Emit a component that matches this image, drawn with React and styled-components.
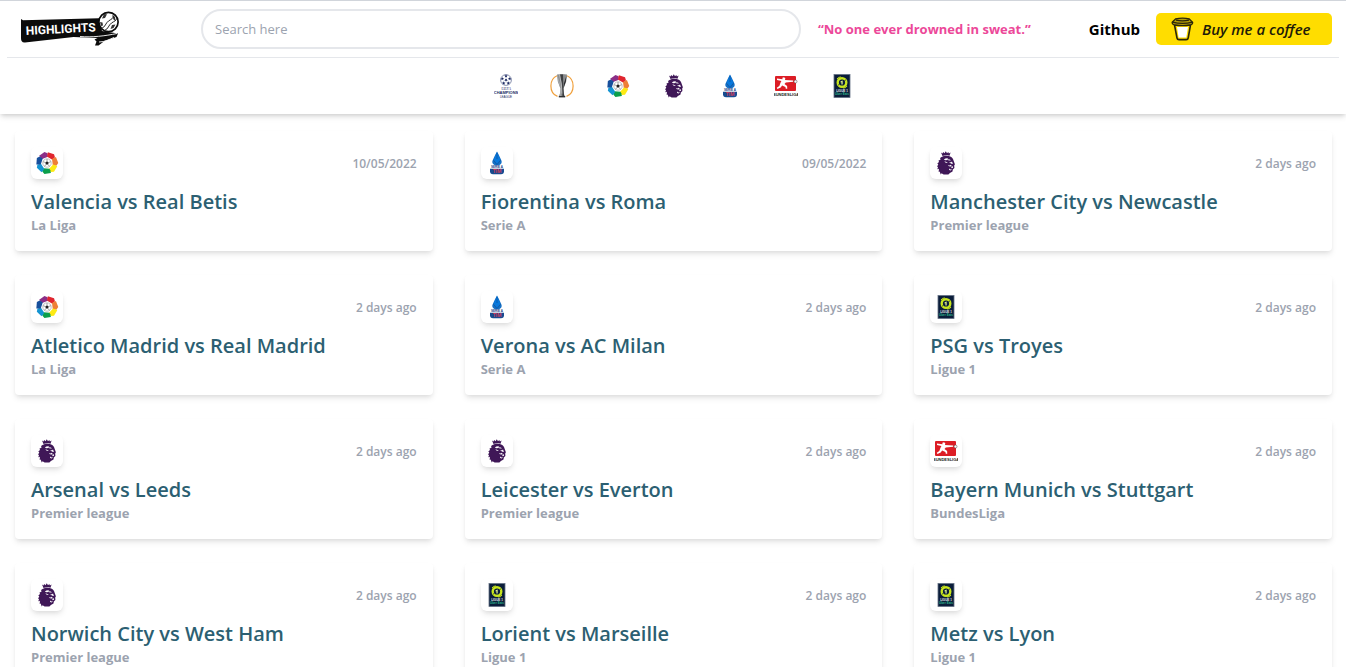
import React from "react";
import styled, { createGlobalStyle } from "styled-components";

const GlobalStyle = createGlobalStyle`
  *, *::before, *::after { box-sizing: border-box; }
  body {
    margin: 0;
    background: #fff;
    font-family: "Segoe UI", "Open Sans", "Noto Sans", sans-serif;
    color: #000;
  }
  h2, p, ul { margin: 0; padding: 0; }
  a { color: inherit; text-decoration: none; }
`;

const Header = styled.header`
  background: #fff;
  border-top: 1px solid #d1d5db;
  box-shadow: 0 4px 6px -1px rgba(0, 0, 0, 0.1), 0 2px 4px -1px rgba(0, 0, 0, 0.12);
`;

const TopBar = styled.div`
  display: flex;
  align-items: center;
  height: 57px;
  margin: 0 7px;
  padding: 0 7px 0 13px;
  border-bottom: 1px solid #e5e7eb;
`;

const Brand = styled.a`
  display: flex;
  flex: none;
  margin-right: 80px;
`;

const SearchInput = styled.input`
  flex: 0 1 600px;
  min-width: 120px;
  height: 40px;
  padding: 0 12px;
  border: 2px solid #e5e7eb;
  border-radius: 20px;
  background: #fff;
  font: 400 13px/20px "Segoe UI", "Open Sans", "Noto Sans", sans-serif;
  color: #374151;
  outline: none;
  &::placeholder { color: #9ca3af; opacity: 1; }
  &:focus { border-color: #9ca3af; }
`;

const Quote = styled.p`
  flex: 1;
  margin-left: 17px;
  font-size: 13px;
  line-height: 20px;
  font-weight: 700;
  color: #ec4899;
`;

const GithubLink = styled.a`
  margin-right: 16px;
  font-size: 15px;
  line-height: 24px;
  font-weight: 700;
`;

const CoffeeLink = styled.a`
  display: flex;
  flex: none;
  align-items: center;
  gap: 8px;
  width: 176px;
  height: 32px;
  padding-left: 15px;
  border-radius: 5px;
  background: #ffdd00;
  color: #1d1a08;
  font: italic 600 15px/20px "Segoe Script", "Open Sans", cursive;
  white-space: nowrap;
`;

const LeagueNav = styled.nav`
  display: flex;
  justify-content: center;
  align-items: center;
  gap: 32px;
  height: 56px;
  padding-left: 2px;
`;

const LeagueLink = styled.a`
  display: flex;
`;

const MatchGrid = styled.main`
  display: grid;
  grid-template-columns: repeat(3, 1fr);
  gap: 24px 32px;
  padding: 17px 14px 24px 15px;
  @media (max-width: 1000px) { grid-template-columns: repeat(2, 1fr); }
  @media (max-width: 640px) { grid-template-columns: 1fr; }
`;

const Card = styled.a`
  display: block;
  padding: 16px;
  border-radius: 4px;
  background: #fff;
  box-shadow: 0 4px 6px -1px rgba(0, 0, 0, 0.1), 0 2px 4px -1px rgba(0, 0, 0, 0.06);
`;

const CardTop = styled.div`
  display: flex;
  justify-content: space-between;
  align-items: center;
  margin-bottom: 10px;
`;

const Badge = styled.span`
  display: flex;
  padding: 4px;
  border-radius: 6px;
  box-shadow: 0 4px 6px -1px rgba(0, 0, 0, 0.1), 0 2px 4px -1px rgba(0, 0, 0, 0.06);
`;

const When = styled.span`
  padding-top: 2px;
  font-size: 12px;
  line-height: 16px;
  font-weight: 600;
  color: #9ca3af;
`;

const Title = styled.h2`
  font-size: 20px;
  line-height: 26px;
  font-weight: 600;
  color: #2c5f72;
`;

const League = styled.p`
  font-size: 13px;
  line-height: 20px;
  font-weight: 700;
  color: #9ca3af;
`;

function Icon({ children }) {
  return (
    <svg width="24" height="24" viewBox="0 0 24 24" fill="none" aria-hidden="true">
      {children}
    </svg>
  );
}

const star = "M0-1.8L.5-.6 1.8-.6.8.2 1.1 1.5 0 .8-1.1 1.5-.8.2-1.8-.6-.5-.6z";

function ChampionsIcon() {
  return (
    <Icon>
      <g fill="#1c2a63">
        <circle cx="12" cy="6" r="5.4" fill="#fff" stroke="#5c678f" strokeWidth=".7" />
        {[0, 72, 144, 216, 288].map((a) => (
          <path key={a} d={star} transform={`translate(12 6) rotate(${a}) translate(0 -3.9)`} />
        ))}
        <path d={star} transform="translate(12 6) rotate(36)" />
        <text x="12" y="16" fontSize="4" fontFamily="Liberation Serif, serif" fontStyle="italic" textAnchor="middle">UEFA</text>
        <text x="12" y="20" fontSize="4" fontWeight="700" fontFamily="Liberation Sans, sans-serif" textAnchor="middle">CHAMPIONS</text>
        <text x="12" y="24" fontSize="3" fontFamily="Liberation Sans, sans-serif" textAnchor="middle">LEAGUE</text>
      </g>
    </Icon>
  );
}

function EuropaIcon() {
  return (
    <Icon>
      <path d="M7 1.8C3 3.6.9 7.4.9 12s2.3 8.8 6.6 10.4M17 1.8c4 1.8 6.1 5.6 6.1 10.2s-2.3 8.800-6.600 10.400" stroke="#f0a03c" strokeWidth="1.2" />
      <path d="M7 .6c3-.8 7-.8 10 0l-.8 6.8-2.600 7.200.2 5.200 1.400 3H8.800l1.400-3 .2-5.200-2.600-7.200z" fill="#8b8d8f" />
      <path d="M7.300 1l3 9 .6 12H8.800l1.400-3 .2-5-2.400-7z" fill="#a5a7a9" />
      <path d="M10 .5l2 10 .4 12h1.800l-.8-8L13 .4z" fill="#3d3f41" />
      <path d="M16.600 1.200l-2.600 8-.6 5 2.400-6.500z" fill="#292a2c" />
      <path d="M9.500.6l1.900 10 .5 9" stroke="#d0d2d3" strokeWidth=".6" />
      <path d="M8.800 22h6.400v1.400H8.800z" fill="#303133" />
    </Icon>
  );
}

const ligaColors = ["#8b2f87", "#e0252f", "#ee7f36", "#fdea14", "#0b9f4b", "#1594d2", "#174f9c"];

function LaLigaIcon() {
  return (
    <Icon>
      {ligaColors.map((c, i) => (
        <path key={c} d="M-4-10L2.400-11 4.600-8.600 3.400-5.200-2.600-5.700-3.400-7.300z" fill={c} transform={`translate(12 12) rotate(${-25 + i * 51.43})`} />
      ))}
      <circle cx="12" cy="12" r="4.200" fill="#fff" stroke="#999" strokeWidth=".6" />
      <path d="M12 10.200l1.700 1.300-.6 2h-2.200l-.6-2z" fill="#222" />
      <path d="M12 10.200V8M13.700 11.500l2.200-.8M13.100 13.500l1.300 1.900M10.900 13.500l-1.300 1.900M10.300 11.500l-2.200-.8" stroke="#666" strokeWidth=".6" />
    </Icon>
  );
}

function PremierIcon() {
  return (
    <Icon>
      <g fill="#3f1757">
        <path d="M7 1.600l1.500 1L9.200.900l1.300 1.300L11.800.2l1.200 2L14.300.9l.6 1.700 1.700-1-1.100 3.200c-2.500-.7-4.600-.6-7 .1z" />
        <path d="M7.500 6c2.600-1.500 6.800-1.700 9.300-.2 1.500.9 2.600 2.400 2.900 4.200l1.200 3.200-.7 1.300.2 2.600-1.600 1.300-.3 2.200-2.600 1.300-1.500 1.600H9.600l-2-1.300-.9 1.200-1-3-1 .5.200-3.100-1.600.5.8-2.500-1.200-.1 1.400-2.300-1-.8 1.700-1.700-.5-1.500 2-.6-.4-1.700z" />
      </g>
      <path d="M9.800 8.400c1.200-1 2.900-1.400 4.500-1.100l-1.300 1 2.600.1 1.500.9-2 .2-1.500-.6-2.200.3zM10.300 10.300l2.200.7 1.400 1-2.200-.2zM15 11.200l2 .1 1-.7.9 2.300-1.500-.1zM14 14l1.900.6.8-.8 1.100 1.100-1.200.7-1.700-.3zM17.300 15.800l1.600-.5.1 1.400-1.500.6zM15 17.600l1.600.9 1.400-.2-1.300 1.300-1.500-.6z" fill="#fff" />
    </Icon>
  );
}

function SerieAIcon() {
  return (
    <Icon>
      <path d="M12 .6c1.400 2.500 2.400 4.600 3.500 7 1.100 2.300 1.700 3.500.8 4.900-.8 1.300-2.500 1.800-4.300 1.800s-3.500-.5-4.300-1.800c-.9-1.400-.3-2.600.8-4.900C9.600 5.200 10.600 3.100 12 .6z" fill="#1670c6" />
      <path d="M12 1l3.200 7.500-3.200 4-3.200-4z" fill="#0878dc" />
      <path d="M8.400 9.300l3.600 4.300 3.600-4.300M12 2v6" stroke="#0756a5" strokeWidth=".8" />
      <text x="12" y="17" fontSize="3" fontWeight="700" fontFamily="Liberation Sans, sans-serif" fill="#143e83" textAnchor="middle">SERIE A</text>
      <path d="M5 17.800h14v2.400a3 3 0 0 1-3 3H8a3 3 0 0 1-3-3z" fill="#174c91" />
      <text x="12" y="22" fontSize="5" fontWeight="700" fontFamily="Liberation Sans, sans-serif" fill="#d33b58" textAnchor="middle">TIM</text>
    </Icon>
  );
}

function BundesligaIcon() {
  return (
    <Icon>
      <rect x="1" y="2" width="21" height="15" rx="1" fill="#dc1d25" />
      <path d="M3 4.600l5.500.6-.1-1.400 1.700-.5 1.300 1.300-.5 1.500 8.300.4v1.200l-7.400.7-1.300 1.500 2.600 2 .2 2.900-1.500-.1-.4-1.800-3.300-1.500-1.400 2-3.300 1.700-.6-1.300 2.500-1.700 1.200-3.300.9-1.700L3 6z" fill="#fff" />
      <circle cx="21.500" cy="7.500" r="1.500" fill="#fff" stroke="#555" strokeWidth=".6" />
      <text x="12" y="22" fontSize="4" fontWeight="700" fontFamily="Liberation Sans, sans-serif" fill="#222" textAnchor="middle">BUNDESLIGA</text>
    </Icon>
  );
}

function LigueOneIcon() {
  return (
    <Icon>
      <rect x="4" y=".5" width="16" height="23" fill="#0b1d3a" stroke="#647184" strokeWidth=".8" />
      <circle cx="12" cy="8.500" r="4.300" stroke="#c8e51e" strokeWidth="2.400" />
      <path d="M7 5l1.500-1.600L11 3M17 12l-1.400 1.600-2.600.4" stroke="#c8e51e" strokeWidth="1" />
      <path d="M12 5.800l2.400 1.400v2.700L12 11.300 9.600 9.900V7.200z" fill="#0b1d3a" />
      <path d="M12.700 6.600v4h-1.300V8.200l-.8.200V7.300z" fill="#dbeb8a" />
      <path d="M8 11.200l1.600-1M16 5.800l-1.600 1" stroke="#0b1d3a" strokeWidth=".7" />
      <text x="12" y="18" fontSize="3" fontWeight="700" fontFamily="Liberation Sans, sans-serif" fill="#e5e9ef" textAnchor="middle">LIGUE 1</text>
      <text x="12" y="21" fontSize="3" fontWeight="700" fontFamily="Liberation Sans, sans-serif" fill="#2bb58b" textAnchor="middle">Uber Eats</text>
    </Icon>
  );
}

function BrandLogo() {
  return (
    <svg width="101" height="36" viewBox="0 0 101 36" fill="none" role="img" aria-label="Highlights">
      <path d="M1 8l2 1.200 76-2L82 20l16 2.500-1.500 3.500-12 4-6 4.500h-3.500l1.500-4-2-2 3-1.500-24-1L5 31.500C2 31.700 1 30 1 27z" fill="#0b0b0b" />
      <path d="M60 25.500c12 1 25-.5 37-3M79 31c6 0 10-2.600 15-4.500" stroke="#fff" strokeWidth=".9" />
      <text x="6" y="24" transform="rotate(-3 6 24)" fontSize="12" fontWeight="700" fontFamily="Roboto, sans-serif" fill="#fff">HIGHLIGHTS</text>
      <circle cx="88.500" cy="11" r="9.600" fill="#fff" stroke="#0b0b0b" strokeWidth="1.700" />
      <path d="M84 3l3 .3-2 3.700-3 .6zM92 4l3 2 .5 4-2-1.500zM80 11l2.500.5.5 3-2 .5zM92 14l3.500-.5-2 3.500-3 1z" fill="#333" />
      <path d="M81.500 17.500c4-1.500 4-5.500 7-7.500s5-2.500 6-6.500M84.500 19.500c4-1.500 4-5.500 7-7.500s4.500-2 5.500-5" stroke="#222" strokeWidth="1" />
    </svg>
  );
}

function CoffeeCup() {
  return (
    <svg width="23" height="24" viewBox="0 0 23 24" fill="none" aria-hidden="true">
      <path d="M3.500 8h16l-2.300 13c-.2 1.200-.8 1.600-2 1.600H8c-1.300 0-1.800-.5-2-1.600z" fill="#ffdd00" stroke="#2b260b" strokeWidth="1.600" />
      <path d="M6 10h11l-1.700 10.500H7.600z" fill="#fff" />
      <path d="M1.200 5.300L4.400 2c4.500-1.100 9.800-1.100 14 0l3.200 3.300c.4 1.600-1.300 2.500-3 2.700-4.600.7-9.600.7-14.400 0-1.700-.2-3.300-1-3-2.700z" fill="#b69e06" stroke="#2b260b" strokeWidth="1.300" />
      <path d="M1.500 5.200c6 1.500 14 1.500 20 0M5 3.200c4 .8 9 .8 13 0" stroke="#2b260b" strokeWidth="1.200" />
    </svg>
  );
}

const leagues = {
  ucl: { name: "Champions League", Logo: ChampionsIcon },
  uel: { name: "Europa League", Logo: EuropaIcon },
  liga: { name: "La Liga", Logo: LaLigaIcon },
  pl: { name: "Premier league", Logo: PremierIcon },
  seriea: { name: "Serie A", Logo: SerieAIcon },
  bundes: { name: "BundesLiga", Logo: BundesligaIcon },
  ligue1: { name: "Ligue 1", Logo: LigueOneIcon },
};

const matches = [
  ["liga", "Valencia vs Real Betis", "10/05/2022"],
  ["seriea", "Fiorentina vs Roma", "09/05/2022"],
  ["pl", "Manchester City vs Newcastle", "2 days ago"],
  ["liga", "Atletico Madrid vs Real Madrid", "2 days ago"],
  ["seriea", "Verona vs AC Milan", "2 days ago"],
  ["ligue1", "PSG vs Troyes", "2 days ago"],
  ["pl", "Arsenal vs Leeds", "2 days ago"],
  ["pl", "Leicester vs Everton", "2 days ago"],
  ["bundes", "Bayern Munich vs Stuttgart", "2 days ago"],
  ["pl", "Norwich City vs West Ham", "2 days ago"],
  ["ligue1", "Lorient vs Marseille", "2 days ago"],
  ["ligue1", "Metz vs Lyon", "2 days ago"],
];

function MatchCard({ league, title, when }) {
  const { name, Logo } = leagues[league];
  return (
    <Card href="#match">
      <CardTop>
        <Badge><Logo /></Badge>
        <When>{when}</When>
      </CardTop>
      <Title>{title}</Title>
      <League>{name}</League>
    </Card>
  );
}

export default function App() {
  return (
    <>
      <GlobalStyle />
      <Header>
        <TopBar>
          <Brand href="#home"><BrandLogo /></Brand>
          <SearchInput type="search" placeholder="Search here" aria-label="Search here" />
          <Quote>“No one ever drowned in sweat.”</Quote>
          <GithubLink href="#github">Github</GithubLink>
          <CoffeeLink href="#coffee"><CoffeeCup />Buy me a coffee</CoffeeLink>
        </TopBar>
        <LeagueNav aria-label="Leagues">
          {Object.entries(leagues).map(([key, { name, Logo }]) => (
            <LeagueLink key={key} href={`#${key}`} aria-label={name}><Logo /></LeagueLink>
          ))}
        </LeagueNav>
      </Header>
      <MatchGrid>
        {matches.map(([league, title, when]) => (
          <MatchCard key={title} league={league} title={title} when={when} />
        ))}
      </MatchGrid>
    </>
  );
}
